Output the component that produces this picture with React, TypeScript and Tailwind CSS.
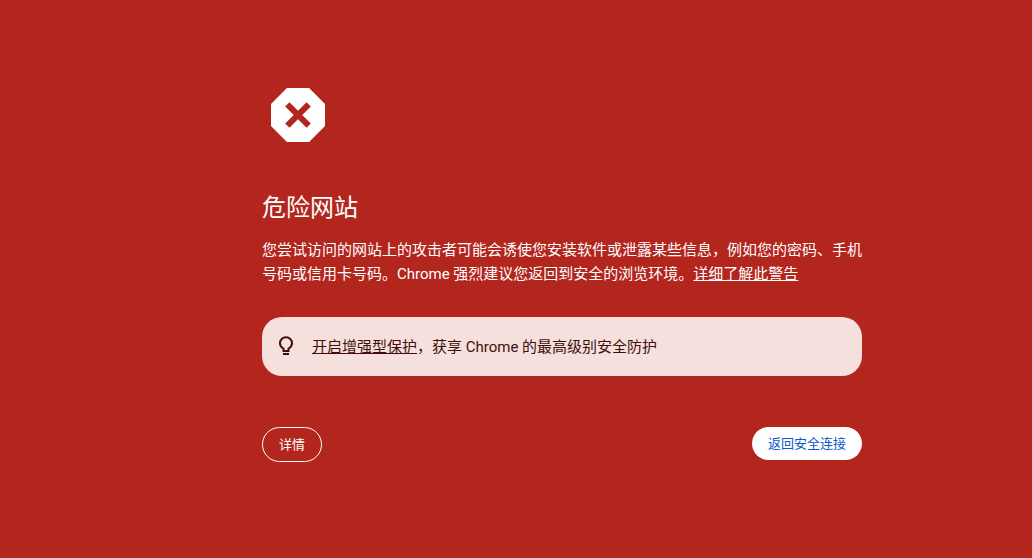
const OctagonIcon = () => (
  <svg width="72" height="72" viewBox="0 0 72 72" fill="none" aria-hidden="true">
    <path d="M24.9 9h22.2L63 24.9v22.2L47.1 63H24.9L9 47.1V24.9L24.9 9Z" fill="#fff" />
    <path d="M25.3 25.3l21.4 21.4M46.7 25.3l-21.4 21.4" stroke="#b3261e" strokeWidth="6" />
  </svg>
);

const BulbIcon = () => (
  <svg
    className="shrink-0"
    width="24"
    height="24"
    viewBox="0 0 24 24"
    fill="none"
    stroke="#410e0b"
    strokeWidth="2"
    aria-hidden="true"
  >
    <path d="M9.5 17v-2.4C7.400 13.500 6 11.600 6 9.300a6 6 0 0 1 12 0c0 2.300-1.400 4.200-3.500 5.300V17Z" />
    <path d="M9 20h6" />
  </svg>
);

const App = () => {
  return (
    <div className="min-h-screen bg-[#b3261e] pt-[79px] pr-6 pb-10 pl-6 font-[Roboto,'Noto_Sans_CJK_SC',sans-serif] text-white md:pl-[116px]">
      <main className="mx-auto w-full max-w-[600px]">
        <OctagonIcon />
        <h1 className="mt-[41px] text-2xl leading-8">危险网站</h1>
        <p className="mt-[14px] text-[15px] leading-6">
          您尝试访问的网站上的攻击者可能会诱使您安装软件或泄露某些信息，例如您的密码、手机号码或信用卡号码。Chrome
          强烈建议您返回到安全的浏览环境。
          <a href="#" className="underline">
            详细了解此警告
          </a>
        </p>
        <div className="mt-[31px] flex items-start gap-[14px] rounded-[20px] bg-[#f5e0de] px-3 pt-[17px] pb-4 text-[15px] leading-[26px] text-[#410e0b]">
          <BulbIcon />
          <p>
            <a href="#" className="underline">
              开启增强型保护
            </a>
            ，获享 Chrome 的最高级别安全防护
          </p>
        </div>
        <div className="mt-[51px] flex items-start justify-between text-[13px] leading-[17px]">
          <button className="rounded-full border border-white px-4 py-2">详情</button>
          <button className="rounded-full bg-white px-4 py-2 text-[#0b57d0]">返回安全连接</button>
        </div>
      </main>
    </div>
  );
};

export default App;
